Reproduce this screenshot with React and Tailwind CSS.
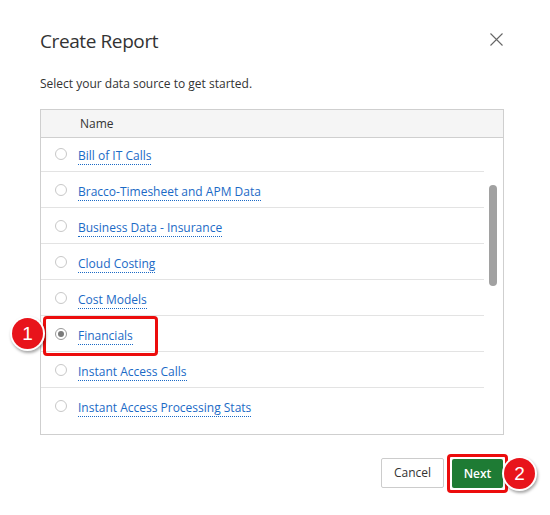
import React, { useState } from 'react';

const sources = [
  'Bill of IT Calls',
  'Bracco-Timesheet and APM Data',
  'Business Data - Insurance',
  'Cloud Costing',
  'Cost Models',
  'Financials',
  'Instant Access Calls',
  'Instant Access Processing Stats',
];

function Badge({ n, className }) {
  return (
    <div className={`absolute w-[35px] h-[35px] rounded-full bg-white shadow-[1px_2px_3px_rgba(0,0,0,0.35)] flex items-center justify-center ${className}`}>
      <div className="w-[31px] h-[31px] rounded-full bg-[#e8141b] flex items-center justify-center text-white text-[19px] leading-none font-['Liberation_Sans',Arial,sans-serif]">
        {n}
      </div>
    </div>
  );
}

function Radio({ checked }) {
  return (
    <span className={`w-[12px] h-[12px] shrink-0 rounded-full border flex items-center justify-center ${checked ? 'border-[#9a9a9a]' : 'border-[#c8c8c8]'} bg-white`}>
      {checked && <span className="w-[6px] h-[6px] rounded-full bg-[#7a7a7a]" />}
    </span>
  );
}

export default function App() {
  const [selected, setSelected] = useState('Financials');

  return (
    <div className="relative w-[550px] h-[515px] bg-white text-[#333] font-['Open_Sans','Noto_Sans',sans-serif] overflow-hidden">
      <div className="flex items-start justify-between pl-[40px] pr-[47px] pt-[27px]">
        <h1 className="text-[19px] leading-[28px] tracking-[-0.4px] font-normal text-[#333]">Create Report</h1>
        <button className="mt-[6px] text-[#666]">
          <svg width="13" height="13" viewBox="0 0 13 13" fill="none" stroke="currentColor" strokeWidth="1.1">
            <path d="M0.5 0.5L12.5 12.5M12.5 0.5L0.5 12.5" />
          </svg>
        </button>
      </div>

      <p className="pl-[40px] mt-[21px] text-[12px] leading-[16px] text-[#333]">Select your data source to get started.</p>

      <div className="ml-[40px] mt-[17px] w-[464px] h-[326px] border border-[#cfcfcf] flex flex-col">
        <div className="h-[28px] shrink-0 bg-[#f5f5f5] border-b border-[#cfcfcf] flex items-center pl-[39px] text-[12px] text-[#333]">
          Name
        </div>
        <div className="flex-1 flex overflow-hidden">
          <div className="w-[443px] -mt-[2px]">
            {sources.map((s, i) => (
              <div
                key={s}
                onClick={() => setSelected(s)}
                className={`relative h-[36px] flex items-center pl-[14px] gap-[11px] cursor-pointer ${i < sources.length - 1 ? 'border-b border-[#e3e3e3]' : ''}`}
              >
                <Radio checked={selected === s} />
                <span className="mt-[4px] text-[12px] leading-[17px] text-[#1b6ac6] border-b border-dotted border-[#1b6ac6]">{s}</span>
                {s === 'Financials' && (
                  <div className="absolute left-[2px] top-0 w-[115px] h-[40px] border-[3px] border-[#ec0c0c] rounded-[4px] pointer-events-none" />
                )}
              </div>
            ))}
          </div>
          <div className="flex-1 relative">
            <div className="absolute left-[5px] top-[47px] w-[8px] h-[101px] rounded-full bg-[#a1a1a1]" />
          </div>
        </div>
      </div>

      <div className="flex justify-end gap-[7px] pr-[46px] mt-[23px]">
        <button className="w-[63px] h-[30px] border border-[#ccc] rounded-[2px] bg-white text-[12px] text-[#333]">Cancel</button>
        <div className="-m-[4px] p-[2px] border-[3px] border-[#ec0c0c] rounded-[4px]">
          <button className="block w-[51px] h-[29px] bg-[#1e7b34] rounded-[2px] text-white text-[12px] font-semibold">Next</button>
        </div>
      </div>

      <Badge n="1" className="left-[10px] top-[316px]" />
      <Badge n="2" className="left-[502px] top-[456px]" />
    </div>
  );
}
